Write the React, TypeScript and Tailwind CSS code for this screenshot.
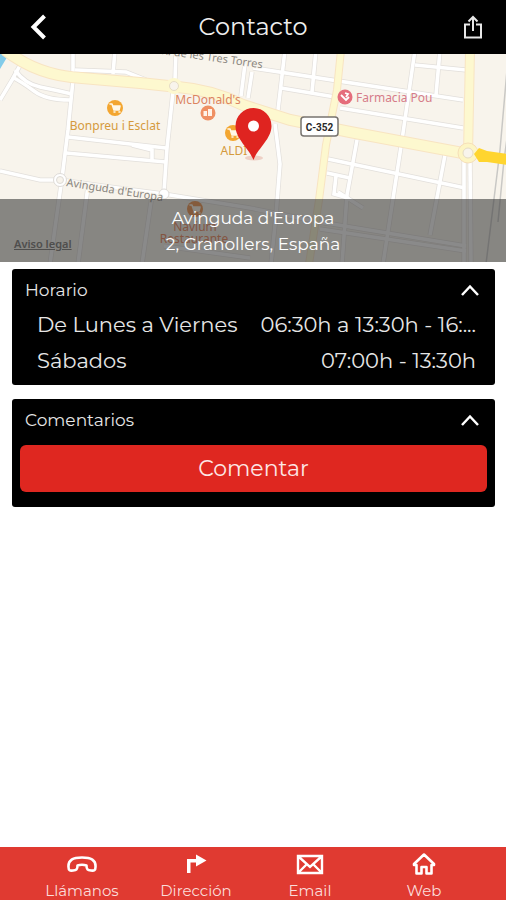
import type { ReactNode } from "react";

const roads = [
  "M73 50L73 76", "M115 50L113 74", "M75 70L126 72L146 80", "M176 50L175 80",
  "M173 92L167 148L164 192", "M73 80L68 130L62 178L50 264",
  "M24 58L12 80L0 100", "M15 70Q25 84 40 87T72 94", "M12 77Q22 82 34 91T70 100",
  "M68 137L166 148", "M66 153L166 162", "M132 145L152 150L152 160",
  "M0 171L40 180L60 180L110 187L164 194L250 208L330 224",
  "M88 186L78 264", "M152 195L142 264", "M245 64L241 96", "M253 68L463 100", "M252 72L248 98",
  "M285 50L278 110", "M316 50L312 92", "M281 88L335 97", "M340 108L463 128",
  "M415 50L402 140L383 264", "M440 50L436 95", "M415 65L466 70",
  "M275 124L280 164L276 215L271 264", "M357 140L347 195L342 264",
  "M328 159L465 188", "M445 155L430 235", "M464 160L464 264", "M470 160L471 264",
  "M327 173L350 178", "M336 176L334 194L348 198", "M320 222L466 246", "M320 229L466 251",
  "M338 192L363 208", "M164 246L250 258",
];

function Cart({ x, y, color = "#f3a631" }: { x: number; y: number; color?: string }) {
  return (
    <g transform={`translate(${x} ${y})`}>
      <circle r="8" fill={color} />
      <path d="M-5 -4h2l2 6h5l1-4h-7M-1 4h1M4 4h1" fill="none" stroke="#fff8e8" strokeWidth="1.6" strokeLinecap="round" strokeLinejoin="round" />
      <path d="M-2 -2h7l-1 4h-5z" fill="#fff8e8" />
    </g>
  );
}

function StreetMap() {
  return (
    <svg
      viewBox="0 54 506 208"
      preserveAspectRatio="xMidYMid slice"
      className="block h-full w-full font-['Noto_Sans',sans-serif]"
      role="img"
      aria-label="Mapa de Granollers"
    >
      <rect y="54" width="506" height="208" fill="#f8f4ec" />
      <path d="M0 54H9L0 69Z" fill="#82cbe9" />
      <g fill="none" stroke="#e2dfdb" strokeWidth="5">
        {roads.map((d) => <path key={d} d={d} />)}
      </g>
      <g fill="none" stroke="#fff" strokeWidth="3.6">
        {roads.map((d) => <path key={d} d={d} />)}
      </g>
      <g fill="none" stroke="#c9c8c5" strokeWidth="1.5">
        <path d="M507 70L500 150L486 264" />
        <path d="M511 110L504 160L498 222" />
      </g>
      {["#f8e4c2", "#fdf8cf"].map((color, i) => (
        <g key={color} fill="none" stroke={color}>
          <path d="M5 50Q38 76 82 78L140 83L178 87Q213 90 243 105L290 120L350 132L468 154" strokeWidth={i ? 10 : 12} />
          <path d="M341 50L337 90L326 145L319 200L309 264" strokeWidth={i ? 6 : 8} />
          <path d="M470 50L468 155" strokeWidth={i ? 8 : 10} />
        </g>
      ))}
      <circle cx="174" cy="86" r="8" fill="#fdf8cf" />
      <circle cx="174" cy="86" r="4.5" fill="#f8f4ec" stroke="#e5dcc4" />
      <circle cx="468" cy="153" r="10" fill="#fdf5c4" stroke="#f6dfb8" />
      <circle cx="468" cy="153" r="5" fill="#f8f4ec" stroke="#e5dcc4" />
      <path d="M474 154L479 148L487 151L508 154V165L487 162L479 162Z" fill="#ffd52f" />
      <circle cx="60" cy="180" r="6.5" fill="#fff" stroke="#dedbd7" />
      <circle cx="60" cy="180" r="3.5" fill="#f8f4ec" stroke="#dedbd7" />
      <circle cx="164" cy="194" r="5" fill="#fff" stroke="#dedbd7" />

      <g fill="#8a8680" stroke="#f8f4ec" strokeWidth="2" paintOrder="stroke" fontSize="11">
        <text x="161" y="54" transform="rotate(8 161 54)">R. de les Tres Torres</text>
        <text x="66" y="186" transform="rotate(9 66 186)">Avinguda d'Europa</text>
      </g>
      <g fill="#d59a3d" fontSize="12" textAnchor="middle">
        <text x="115" y="130">Bonpreu i Esclat</text>
        <text x="234" y="155">ALDI</text>
        <text x="208" y="104" fill="#dc8462">McDonald's</text>
      </g>
      <Cart x={115} y={108} />
      <Cart x={233} y={133} />
      <circle cx="208" cy="113" r="7.5" fill="#ef9063" />
      <path d="M203.500 111H207V116H203.500ZM208 109H212V116H208Z" fill="#fff3e8" />
      <Cart x={195} y={209} color="#f08a3c" />
      <g fill="#ee7a48" fontSize="12" textAnchor="middle">
        <text x="195" y="231">Navium</text>
        <text x="194" y="243">Restaurante</text>
      </g>
      <circle cx="345" cy="97" r="7.500" fill="#e56d7c" />
      <path d="M341 95L346 100L349 97M345 93L348 94L346 97" fill="none" stroke="#fff" strokeWidth="1.800" />
      <text x="356" y="102" fill="#d67c89" fontSize="12">Farmacia Pou</text>
      <rect x="301" y="117" width="37" height="19" rx="3" fill="#fff" stroke="#77736f" strokeWidth="1.500" />
      <text x="319.500" y="131" textAnchor="middle" fill="#292929" fontSize="10" fontWeight="700" className="font-['Roboto',sans-serif]">C-352</text>

      <ellipse cx="254" cy="158" rx="9" ry="2.500" fill="#e7b8ac" opacity=".6" />
      <path d="M253.500 160C249 148 235.500 139 235.500 126A18 18 0 0 1 271.500 126C271.500 139 258 148 253.500 160Z" fill="#df2420" />
      <circle cx="253.500" cy="126" r="5.500" fill="#fff" />
    </svg>
  );
}

function Panel({ title, children }: { title: string; children: ReactNode }) {
  return (
    <section className="rounded-[3px] bg-black text-[#e6e6e6]">
      <button type="button" aria-expanded="true" className="flex h-[38px] w-full items-center justify-between pt-1 pr-4 pl-[13px] text-[17px] leading-6">
        <span>{title}</span>
        <svg viewBox="0 0 18 12" className="h-3 w-[18px]" fill="none" stroke="#fff" strokeWidth="2.5" aria-hidden="true">
          <path d="M1 11L9 2.500L17 11" />
        </svg>
      </button>
      {children}
    </section>
  );
}

const hours = [
  { day: "De Lunes a Viernes", time: "06:30h a 13:30h - 16:..." },
  { day: "Sábados", time: "07:00h - 13:30h" },
];

const links = [
  {
    label: "Llámanos",
    icon: <path d="M1.500 14C1 7 6 4.500 15 4.500S29 7 28.500 14C28.500 17.500 27 18 24 17.500C20.500 17 19.500 16.500 19.500 12.500Q15 11 10.500 12.500C10.500 16.500 9.500 17 6 17.500C3 18 1.500 17.500 1.500 14Z" fill="none" stroke="#fff" strokeWidth="2.600" strokeLinejoin="round" />,
  },
  {
    label: "Dirección",
    icon: <path d="M6 20V6H15V1.500L25.500 7.500L15 13.500V9.500H9.500V20Z" fill="#fff" />,
  },
  {
    label: "Email",
    icon: <path d="M3 3H27V20H3ZM4 4L15 14L26 4M4 19L11.500 11.500M26 19L18.500 11.500" fill="none" stroke="#fff" strokeWidth="2.400" />,
  },
  {
    label: "Web",
    icon: <path d="M5 11L15 1.500L25 11V12H22.500V20.500H17.500V14H12.500V20.500H7.500V12H5Z" fill="none" stroke="#fff" strokeWidth="2.600" strokeLinejoin="round" />,
  },
];

export default function App() {
  return (
    <div className="flex min-h-screen flex-col bg-white font-['Montserrat','Inter',sans-serif]">
      <header className="grid h-[54px] shrink-0 grid-cols-[1fr_auto_1fr] items-center bg-black text-[#eee]">
        <button type="button" aria-label="Volver" className="ml-[30px] justify-self-start">
          <svg viewBox="0 0 16 26" className="h-[26px] w-4" fill="none" stroke="#fff" strokeWidth="4">
            <path d="M14.500 2L3.500 13L14.500 24" />
          </svg>
        </button>
        <h1 className="text-[24px] leading-8">Contacto</h1>
        <button type="button" aria-label="Compartir" className="mr-6 justify-self-end">
          <svg viewBox="0 0 18 24" className="h-6 w-[18px]" fill="none" stroke="#e8e8e8" strokeWidth="2">
            <path d="M6 9.500H1V22.500H17V9.500H12M9 16V2M4.500 6.500L9 2L13.500 6.500" />
          </svg>
        </button>
      </header>

      <div className="relative h-52 shrink-0 overflow-hidden">
        <StreetMap />
        <a href="#legal" className="absolute bottom-2.5 left-3.5 font-['Noto_Sans',sans-serif] text-[11px] leading-4 font-semibold text-[#6b6966] underline">Aviso legal</a>
        <address className="absolute inset-x-0 bottom-0 h-[63px] bg-[#3c3c3c]/60 pt-1.5 text-center text-[17px] leading-[26px] text-white not-italic">
          Avinguda d'Europa
          <br />
          2, Granollers, España
        </address>
      </div>

      <main className="flex flex-1 flex-col gap-3.5 pt-[7px] pr-[11px] pl-3">
        <Panel title="Horario">
          <dl className="pb-1.5">
            {hours.map(({ day, time }) => (
              <div key={day} className="flex h-9 items-center justify-between pr-[19px] pl-[25px] text-[21px] leading-7">
                <dt>{day}</dt>
                <dd>{time}</dd>
              </div>
            ))}
          </dl>
        </Panel>
        <Panel title="Comentarios">
          <div className="px-2 pt-2 pb-[15px]">
            <button type="button" className="h-[47px] w-full rounded-md bg-[#df2720] text-[22px] leading-7 text-[#fde8e6]">Comentar</button>
          </div>
        </Panel>
      </main>

      <nav className="grid h-[53px] shrink-0 grid-cols-4 overflow-hidden bg-[#e03a31] px-[25px]">
        {links.map(({ label, icon }) => (
          <a key={label} href={`#${label}`} className="flex flex-col items-center gap-1.5 pt-1.5 text-[15px] leading-5 text-[#fbdcd9]">
            <svg viewBox="0 0 30 22" className="h-[22px] w-[30px] shrink-0" aria-hidden="true">{icon}</svg>
            {label}
          </a>
        ))}
      </nav>
    </div>
  );
}
